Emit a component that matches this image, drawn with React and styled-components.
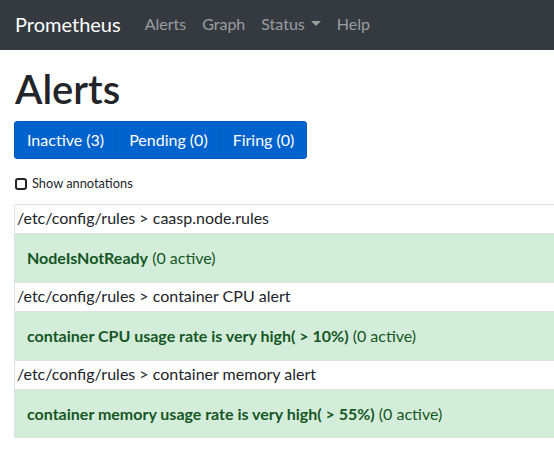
import React from 'react'
import styled, { createGlobalStyle } from 'styled-components'

const GlobalStyle = createGlobalStyle`
    body {
        margin: 0;
        font-family: Lato, "Open Sans", sans-serif;
        font-size: 16px;
        line-height: 1.5;
        color: #212529;
        background: #fff;
        overflow: hidden;
    }
    * { box-sizing: border-box; }
`;

const rules = [
    { file: '/etc/config/rules', group: 'caasp.node.rules', name: 'NodeIsNotReady', active: 0 },
    { file: '/etc/config/rules', group: 'container CPU alert', name: 'container CPU usage rate is very high( > 10%)', active: 0 },
    { file: '/etc/config/rules', group: 'container memory alert', name: 'container memory usage rate is very high( > 55%)', active: 0 },
];

function Caret() {
    return (
        <svg width="10" height="6" viewBox="0 0 10 6">
            <path d="M0 0 L10 0 L5 5 Z" fill="currentColor" />
        </svg>
    )
}

function App() {
    return (
        <>
            <GlobalStyle />
            <NavBar>
                <Brand>Prometheus</Brand>
                <NavLinks>
                    <NavLink>Alerts</NavLink>
                    <NavLink>Graph</NavLink>
                    <NavLink>Status <Caret /></NavLink>
                    <NavLink>Help</NavLink>
                </NavLinks>
            </NavBar>
            <Page>
                <Title>Alerts</Title>
                <ButtonGroup>
                    <FilterButton>Inactive (3)</FilterButton>
                    <FilterButton>Pending (0)</FilterButton>
                    <FilterButton>Firing (0)</FilterButton>
                </ButtonGroup>
                <CheckRow>
                    <Box />
                    <span>Show annotations</span>
                </CheckRow>
                <RulesTable>
                    {rules.map((rule) => (
                        <React.Fragment key={rule.group}>
                            <GroupRow>{rule.file} &gt; {rule.group}</GroupRow>
                            <AlertRow>
                                <strong>{rule.name}</strong> ({rule.active} active)
                            </AlertRow>
                        </React.Fragment>
                    ))}
                </RulesTable>
            </Page>
        </>
    )
}

const NavBar = styled.nav`
    height: 50px;
    background: #343a40;
    display: flex;
    align-items: center;
    padding: 0 15px 3px;
`;

const Brand = styled.div`
    color: #fff;
    font-size: 20px;
    margin-right: 16px;
`;

const NavLinks = styled.div`
    display: flex;
    align-items: center;
`;

const NavLink = styled.div`
    color: rgba(255, 255, 255, 0.5);
    padding: 0 8px;
    display: flex;
    align-items: center;
    gap: 6px;
`;

const Page = styled.div`
    padding: 0 0 0 14px;
`;

const Title = styled.h1`
    font-size: 40px;
    font-weight: 600;
    line-height: 1.2;
    margin: 15px 0 8px 1px;
`;

const ButtonGroup = styled.div`
    display: inline-flex;
    border-radius: 4px;
    overflow: hidden;
`;

const FilterButton = styled.button`
    font-family: inherit;
    font-size: 16px;
    line-height: 1.5;
    color: #fff;
    background: #0062cc;
    border: 1px solid #005cbf;
    padding: 6px 12px;
    & + & { margin-left: -1px; }
`;

const CheckRow = styled.label`
    display: flex;
    align-items: center;
    gap: 5px;
    font-size: 12.8px;
    margin: 15px 0 11px 1px;
`;

const Box = styled.span`
    width: 12px;
    height: 12px;
    border: 2px solid #212529;
    border-radius: 3px;
`;

const RulesTable = styled.div`
    width: 620px;
    border-left: 1px solid #dee2e6;
`;

const GroupRow = styled.div`
    border-top: 1px solid #dee2e6;
    padding: 1px 2px;
    height: 29px;
`;

const AlertRow = styled.div`
    background: #d4edda;
    color: #155724;
    border-top: 1px solid #dee2e6;
    padding: 12px 12px;
    height: 49px;
    strong { font-weight: 700; }
`;

export default App
